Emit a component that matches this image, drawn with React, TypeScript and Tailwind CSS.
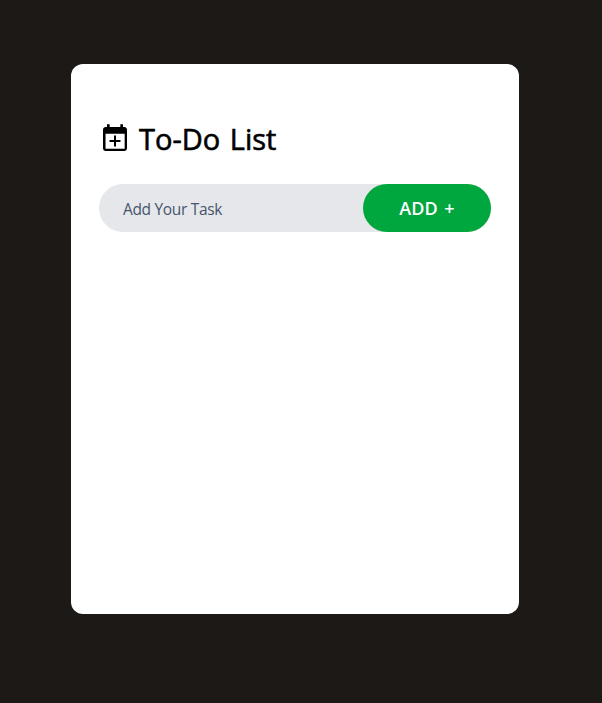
import { useState } from "react";

function CalendarPlusIcon() {
  return (
    <svg className="h-8 w-8 shrink-0" viewBox="0 0 24 24" fill="currentColor" aria-hidden="true">
      <path d="M19 3h-1V1h-2v2H8V1H6v2H5c-1.110 0-2 .9-2 2v14c0 1.100.89 2 2 2h14c1.100 0 2-.9 2-2V5c0-1.100-.9-2-2-2zm.25 16.250H4.900V8h14.350z" />
      <path d="M11.250 17.600h1.500v-3.350h3.350v-1.500h-3.350V9.400h-1.500v3.350H7.900v1.500h3.350z" />
    </svg>
  );
}

export default function App() {
  const [task, setTask] = useState("");
  return (
    <div className="grid h-[703px] bg-[#1c1917] pt-16 pl-[71px] font-['Open_Sans','Noto_Sans',sans-serif]">
      <main className="flex h-[550px] w-[448px] flex-col rounded-xl bg-white px-7 pt-[57px] text-black">
        <div className="flex h-9 items-center gap-2">
          <CalendarPlusIcon />
          <h1 className="text-[29px] leading-9 font-medium [word-spacing:2px] [-webkit-text-stroke:0.6px_black]">To-Do List</h1>
        </div>
        <div className="mt-[27px] flex h-12 items-center rounded-full bg-gray-200">
          <input
            className="h-12 min-w-0 flex-1 bg-transparent pt-[2px] pr-2 pl-6 text-[15.500px] tracking-[-0.33px] outline-none placeholder:text-slate-600"
            placeholder="Add Your Task"
            value={task}
            onChange={(e) => setTask(e.target.value)}
          />
          <button className="h-12 w-32 rounded-full bg-green-600 text-lg font-semibold text-white [word-spacing:2px]">ADD +</button>
        </div>
      </main>
    </div>
  );
}
